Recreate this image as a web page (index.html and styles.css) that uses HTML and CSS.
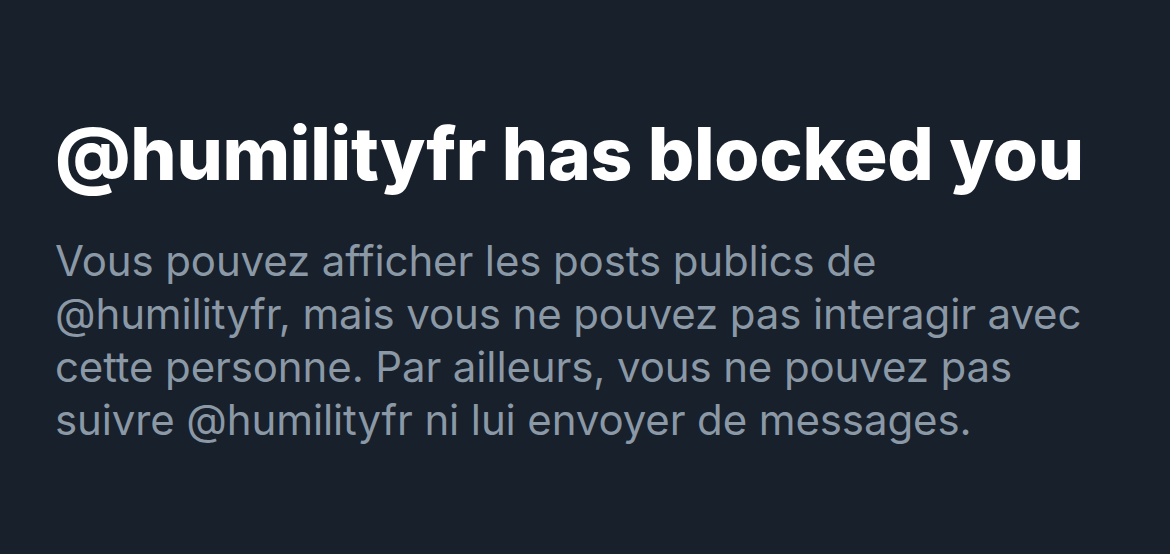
FILE: index.html
```html
<!DOCTYPE html>
<html lang="en">
<head>
  <meta charset="UTF-8">
  <meta name="viewport" content="width=device-width, initial-scale=1.0">
  <title>Blocked</title>
  <link rel="stylesheet" href="styles.css">
</head>
<body>
  <!-- Blocked notice -->
  <div class="blocked">
    <h1 class="blocked-title">@humilityfr has blocked you</h1>
    <p class="blocked-text">Vous pouvez afficher les posts publics de @humilityfr, mais vous ne pouvez pas interagir avec cette personne. Par ailleurs, vous ne pouvez pas suivre @humilityfr ni lui envoyer de messages.</p>
  </div>
</body>
</html>
```
FILE: styles.css
```css
/* Global Styles */
body {
  margin: 0;
  height: 100vh;
  background: #17202b;
  font-family: 'Inter', 'Noto Sans', sans-serif;
}

/* Blocked notice */
.blocked {
  padding: 114px 0 0 55px;
  width: 1045px;
}
.blocked-title {
  margin: 0;
  color: #ffffff;
  font-size: 73px;
  font-weight: 800;
  line-height: 80px;
  letter-spacing: -0.3px;
}
.blocked-text {
  margin: 40px 0 0;
  color: #8b98a5;
  font-size: 42px;
  line-height: 53px;
  letter-spacing: -0.12px;
}
```
